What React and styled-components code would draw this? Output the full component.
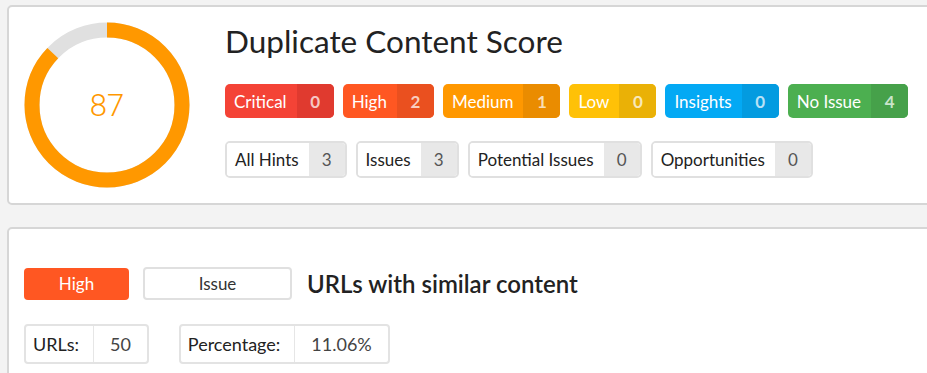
import React from 'react';
import styled, { createGlobalStyle } from 'styled-components';

const GlobalStyle = createGlobalStyle`
  html, body {
    margin: 0;
    padding: 0;
    background: #f3f3f3;
    overflow: hidden;
  }
  body {
    font-family: Lato, 'Open Sans', sans-serif;
  }
`;

const severities = [
  { label: 'Critical', count: 0, color: '#f44336', dark: '#e03a2f' },
  { label: 'High', count: 2, color: '#ff5722', dark: '#ea501f' },
  { label: 'Medium', count: 1, color: '#ff9800', dark: '#ea8c00' },
  { label: 'Low', count: 0, color: '#ffc107', dark: '#eab106' },
  { label: 'Insights', count: 0, color: '#03a9f4', dark: '#039be0' },
  { label: 'No Issue', count: 4, color: '#4caf50', dark: '#46a14a' },
];

const hints = [
  { label: 'All Hints', count: 3 },
  { label: 'Issues', count: 3 },
  { label: 'Potential Issues', count: 0 },
  { label: 'Opportunities', count: 0 },
];

const Donut = ({ score }) => {
  const r = 75;
  const c = 2 * Math.PI * r;
  return (
    <DonutWrap>
      <svg width="166" height="166" viewBox="0 0 166 166">
        <circle cx="83" cy="83" r={r} fill="none" stroke="#e0e0e0" strokeWidth="15" />
        <circle
          cx="83"
          cy="83"
          r={r}
          fill="none"
          stroke="#ff9800"
          strokeWidth="15"
          strokeDasharray={`${(c * score) / 100} ${c}`}
          transform="rotate(-90 83 83)"
        />
      </svg>
      <Score>{score}</Score>
    </DonutWrap>
  );
};

const App = () => (
  <Page>
    <GlobalStyle />
    <ScoreCard>
      <Donut score={87} />
      <Summary>
        <Title>Duplicate Content Score</Title>
        <BadgeRow>
          {severities.map(s => (
            <Badge key={s.label} color={s.color}>
              <BadgeLabel>{s.label}</BadgeLabel>
              <BadgeCount dark={s.dark}>{s.count}</BadgeCount>
            </Badge>
          ))}
        </BadgeRow>
        <HintRow>
          {hints.map(h => (
            <Hint key={h.label}>
              <HintLabel>{h.label}</HintLabel>
              <HintCount>{h.count}</HintCount>
            </Hint>
          ))}
        </HintRow>
      </Summary>
    </ScoreCard>

    <DetailCard>
      <DetailHead>
        <Level>High</Level>
        <Kind>Issue</Kind>
        <DetailTitle>URLs with similar content</DetailTitle>
      </DetailHead>
      <StatRow>
        <Stat>
          <StatLabel>URLs:</StatLabel>
          <StatValue>50</StatValue>
        </Stat>
        <Stat>
          <StatLabel>Percentage:</StatLabel>
          <StatValue>11.06%</StatValue>
        </Stat>
      </StatRow>
    </DetailCard>
  </Page>
);

export default App;

const Page = styled.div`
  display: flex;
  flex-direction: column;
  gap: 22px;
  padding: 5px 0 0 7px;
  margin-right: -12px;
`;

const Card = styled.div`
  background: #fff;
  border: 2px solid #d6d6d6;
  border-radius: 5px;
`;

const ScoreCard = styled(Card)`
  display: flex;
  gap: 35px;
  padding: 15px 15px 15px 15px;
`;

const DonutWrap = styled.div`
  position: relative;
  width: 166px;
  height: 166px;
  flex-shrink: 0;
`;

const Score = styled.div`
  position: absolute;
  inset: 0;
  display: flex;
  align-items: center;
  justify-content: center;
  font-family: Roboto, sans-serif;
  font-weight: 300;
  font-size: 31px;
  color: #ff9800;
`;

const Summary = styled.div`
  display: flex;
  flex-direction: column;
`;

const Title = styled.h1`
  margin: 0;
  font-size: 31.5px;
  font-weight: 400;
  line-height: 38px;
  color: #222;
`;

const BadgeRow = styled.div`
  display: flex;
  gap: 9px;
  margin-top: 24px;
`;

const Badge = styled.div`
  display: flex;
  height: 34px;
  border-radius: 5px;
  overflow: hidden;
  background: ${p => p.color};
  color: #fff;
  font-size: 17px;
`;

const BadgeLabel = styled.span`
  display: flex;
  align-items: center;
  padding: 0 10px 0 9px;
`;

const BadgeCount = styled.span`
  display: flex;
  align-items: center;
  justify-content: center;
  width: 37px;
  background: ${p => p.dark};
  font-weight: 700;
  color: rgba(255, 255, 255, 0.72);
`;

const HintRow = styled.div`
  display: flex;
  gap: 9px;
  margin-top: 23px;
`;

const Hint = styled.div`
  display: flex;
  height: 37px;
  box-sizing: border-box;
  border: 2px solid #e0e0e0;
  border-radius: 5px;
  overflow: hidden;
  font-size: 17px;
`;

const HintLabel = styled.span`
  display: flex;
  align-items: center;
  padding: 0 10px 0 8px;
  color: #222;
  background: #fff;
`;

const HintCount = styled.span`
  display: flex;
  align-items: center;
  justify-content: center;
  width: 36px;
  background: #e8e8e8;
  color: #555;
`;

const DetailCard = styled(Card)`
  padding: 38px 15px 30px;
`;

const DetailHead = styled.div`
  display: flex;
  align-items: center;
  gap: 14px;
`;

const Level = styled.div`
  display: flex;
  align-items: center;
  justify-content: center;
  width: 105px;
  height: 32px;
  border-radius: 4px;
  background: #ff5722;
  color: #fff;
  font-size: 17px;
`;

const Kind = styled.div`
  display: flex;
  align-items: center;
  justify-content: center;
  width: 149px;
  height: 33px;
  box-sizing: border-box;
  border: 2px solid #e0e0e0;
  border-radius: 4px;
  color: #333;
  font-size: 17px;
`;

const DetailTitle = styled.h2`
  margin: 0 0 0 1px;
  font-size: 24px;
  font-weight: 600;
  color: #222;
`;

const StatRow = styled.div`
  display: flex;
  gap: 30px;
  margin-top: 24px;
`;

const Stat = styled.div`
  display: flex;
  height: 40px;
  box-sizing: border-box;
  border: 2px solid #e3e3e3;
  border-radius: 4px;
  font-size: 18px;
`;

const StatLabel = styled.span`
  display: flex;
  align-items: center;
  padding: 0 14px 0 7px;
  color: #222;
  border-right: 1px solid #e6e6e6;
`;

const StatValue = styled.span`
  display: flex;
  align-items: center;
  padding: 0 16px;
  color: #444;
`;
